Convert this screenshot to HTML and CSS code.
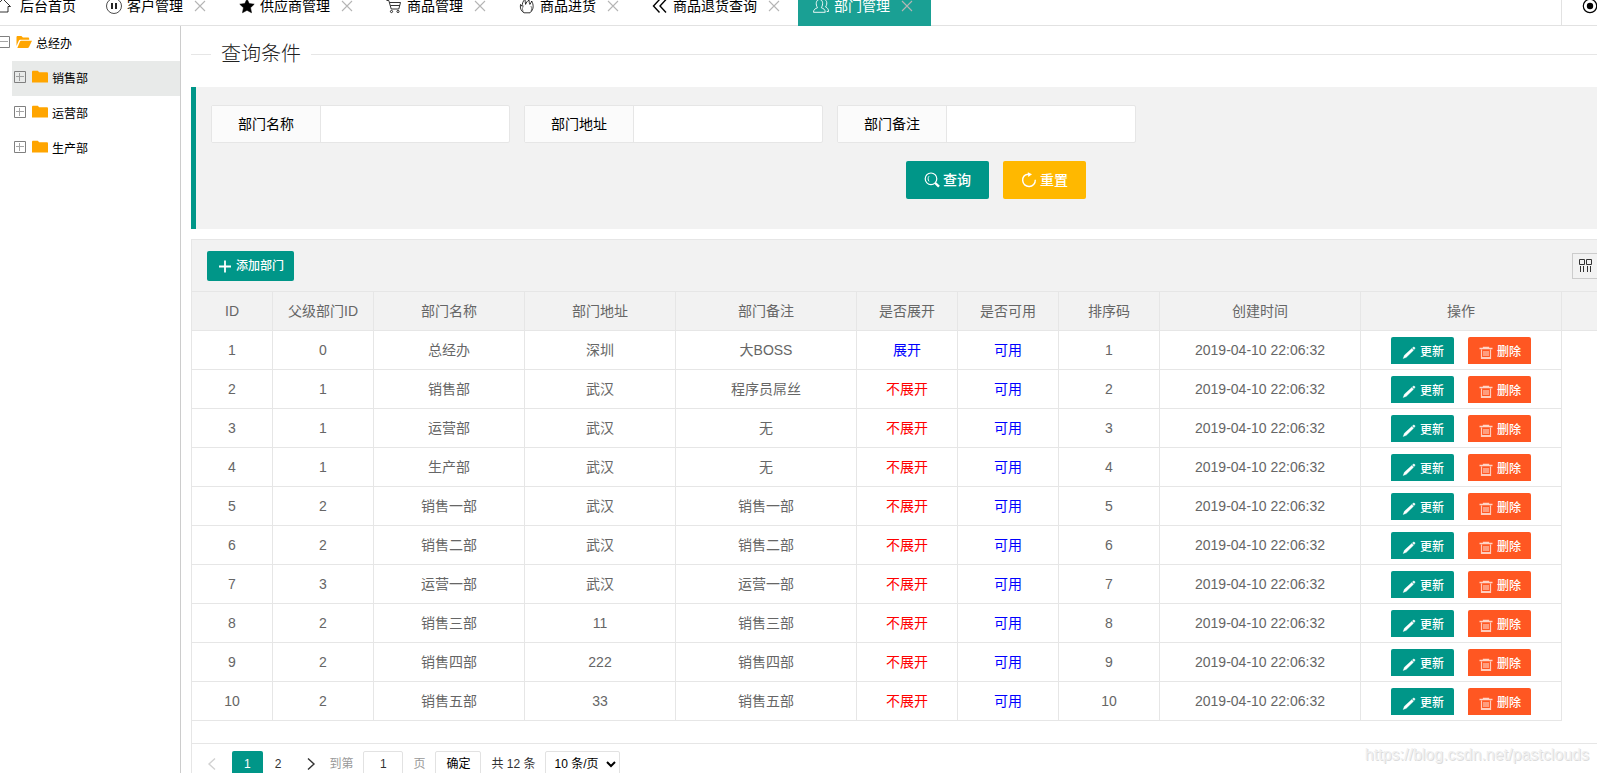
FILE: index.html
```html
<!DOCTYPE html>
<html lang="zh-CN">
<head>
<meta charset="utf-8">
<title>部门管理</title>
<link rel="stylesheet" href="styles.css">
</head>
<body>
<svg class="sprite" aria-hidden="true">
  <symbol id="i-home" viewBox="0 0 16 16"><path d="M.5 8.500 8 1l7.500 7.500h-2.500v5.500h-10V8.500z" fill="none" stroke="currentColor" stroke-width=".8"/></symbol>
  <symbol id="i-pause" viewBox="0 0 16 16"><circle cx="8" cy="8" r="7.500" fill="none" stroke="currentColor" stroke-width=".7"/><path d="M6 5v6M10 5v6" stroke="currentColor" stroke-width="1.700"/></symbol>
  <symbol id="i-star" viewBox="0 0 16 16"><path d="M8 1l2.200 4.600 5 .600-3.700 3.500 1 5L8 12.300 3.500 14.700l1-5L.8 6.200l5-.600z" fill="currentColor" stroke="currentColor" stroke-width=".6"/></symbol>
  <symbol id="i-cart" viewBox="0 0 16 16"><path d="M.5 2.500h2.300l2.400 8.500h7.600l1.700-6.500H3.700M4.600 7.500h9" fill="none" stroke="currentColor" stroke-width=".8"/><circle cx="5.500" cy="13.500" r="1.100" fill="none" stroke="currentColor" stroke-width=".8"/><circle cx="12" cy="13.500" r="1.100" fill="none" stroke="currentColor" stroke-width=".8"/></symbol>
  <symbol id="i-fire" viewBox="0 0 16 16"><path d="M5 14.800C2 13 .8 10 1.500 6.500l1.600 1.800C3.200 5.500 4 3 6 1.200c.2 2 .2 3.600.6 5.200C7.300 4.400 8.300 3 10 2c0 1.700.3 3 .9 4.400.7-.8 1.200-1.800 1.800-3.400 1.800 3.500 2.600 8-1.700 11.800z" fill="none" stroke="currentColor" stroke-width=".8"/><path d="M4.300 13.500C3 11.500 3.300 9.500 4.700 7.500M11.800 13.500c1.200-2 .9-3.800.1-5.500" fill="none" stroke="currentColor" stroke-width=".5"/></symbol>
  <symbol id="i-back" viewBox="0 0 16 16"><path d="M7.500 1.500 1.500 8l6 6.500M14 1.500 8 8l6 6.500" fill="none" stroke="currentColor" stroke-width="1.400"/></symbol>
  <symbol id="i-group" viewBox="0 0 16 16"><path d="M.5 14.300c0-2.800 1.700-3.600 4-4.600C2.300 6.500 3 1.500 6.500 1.500s4 5 1.800 8.200c2.500 1 3.900 1.800 3.900 4.600zM10.200 1.500c3.400-.8 4.800 3.800 2.400 7.500 1.900.9 2.900 2 2.900 4.500h-1.800" fill="none" stroke="currentColor" stroke-width=".9"/></symbol>
  <symbol id="i-close" viewBox="0 0 16 16"><path d="M3 3l10 10M13 3 3 13" stroke="currentColor" stroke-width="1.100"/></symbol>
  <symbol id="i-target" viewBox="0 0 16 16"><circle cx="8" cy="8" r="6.700" fill="none" stroke="currentColor" stroke-width="1.200"/><circle cx="8" cy="8" r="3.200" fill="currentColor"/></symbol>
  <symbol id="i-minus" viewBox="0 0 12 12"><path d="M.5.5h11v11H.5z" fill="none" stroke="currentColor"/><path d="M2 5.500h8" stroke="currentColor" opacity=".7"/></symbol>
  <symbol id="i-plusbox" viewBox="0 0 12 12"><path d="M.5.5h11v11H.5z" fill="none" stroke="currentColor"/><path d="M2 5.500h8M5.500 2v8" stroke="currentColor" opacity=".7"/></symbol>
  <symbol id="i-folder" viewBox="0 0 16 14"><path d="M0 12.500V2C0 1.300.5.800 1.200.8h4.600l1.400 1.500h7.600c.7 0 1.200.4 1.200 1.100v9.100z" fill="currentColor"/></symbol>
  <symbol id="i-open" viewBox="0 0 16 14"><path d="M.5 11V2.200C.5 1.500 1 1 1.700 1h3.700l1.500 1.500H12c.7 0 1.200.5 1.200 1.200v1H4.500c-.8 0-1.300.3-1.700 1.100z" fill="currentColor"/><path d="M1.300 13 4 6.500c.2-.5.600-.8 1.100-.8H16L13 12c-.3.700-.8 1-1.500 1z" fill="currentColor"/></symbol>
  <symbol id="i-search" viewBox="0 0 16 16"><circle cx="7" cy="6.800" r="5.800" fill="none" stroke="currentColor" stroke-width="1.200"/><path d="M5 4.200c-1.200 1.500-1.200 3.600 0 5.200" fill="none" stroke="currentColor"/><path d="M11.200 11l3.800 3.700" stroke="currentColor" stroke-width="2.400"/></symbol>
  <symbol id="i-reset" viewBox="0 0 16 16"><path d="M7 2.200C3.500 2.700 1.500 5.300 1.700 8.600c.3 3.400 3 6 6.500 5.900 3.600-.1 6.300-3 6.100-6.700" fill="none" stroke="currentColor" stroke-width="1.400"/><path d="M6.800.2 11 2.300 7.300 5z" fill="currentColor"/></symbol>
  <symbol id="i-add" viewBox="0 0 16 16"><path d="M2 8.500h12M8 2.500v12" stroke="currentColor" stroke-width="1.800"/></symbol>
  <symbol id="i-edit" viewBox="0 0 16 16"><path d="M2.200 14.500l1.200-3.200L10.800 4.500l1.700 1.800-7.200 7zM11.400 3.900l.9-.7c.4-.3.800-.2 1.100 0l.4.400c.3.400.2.800 0 1.100l-.8.900z" fill="currentColor" stroke="currentColor" stroke-width=".4"/></symbol>
  <symbol id="i-trash" viewBox="0 0 16 16"><path d="M1.500 4.500h13M5.500 4.500v-1H10.500v1" fill="none" stroke="currentColor" stroke-width="1.300" opacity=".75"/><path d="M3.500 5.500v8.800h9V5.500M6 7v5M8 7v5M10 7v5M4 13.600h8" fill="none" stroke="currentColor" stroke-width="1.200" opacity=".7"/></symbol>
  <symbol id="i-cols" viewBox="0 0 14 14"><path d="M1.500.5h5v5h-5zM8.500.5h5v5h-5zM2.500 7v6M5.500 7v6M9.500 7v6M12.500 7v6" fill="none" stroke="currentColor"/></symbol>
  <symbol id="i-left" viewBox="0 0 16 16"><path d="M11 2.500 5 8l6 5.500" fill="none" stroke="currentColor" stroke-width="1.400"/></symbol>
  <symbol id="i-right" viewBox="0 0 16 16"><path d="M5 2.500 11 8l-6 5.500" fill="none" stroke="currentColor" stroke-width="1.400"/></symbol>
</svg>

<header class="tabbar">
  <nav class="tabs">
    <a class="tab home" href="#"><svg class="icon"><use href="#i-home"/></svg>后台首页</a>
    <a class="tab" href="#"><svg class="icon"><use href="#i-pause"/></svg>客户管理<svg class="icon close"><use href="#i-close"/></svg></a>
    <a class="tab" href="#"><svg class="icon"><use href="#i-star"/></svg>供应商管理<svg class="icon close"><use href="#i-close"/></svg></a>
    <a class="tab" href="#"><svg class="icon"><use href="#i-cart"/></svg>商品管理<svg class="icon close"><use href="#i-close"/></svg></a>
    <a class="tab" href="#"><svg class="icon"><use href="#i-fire"/></svg>商品进货<svg class="icon close"><use href="#i-close"/></svg></a>
    <a class="tab" href="#"><svg class="icon"><use href="#i-back"/></svg>商品退货查询<svg class="icon close"><use href="#i-close"/></svg></a>
    <a class="tab active" href="#"><svg class="icon"><use href="#i-group"/></svg>部门管理<svg class="icon close"><use href="#i-close"/></svg></a>
  </nav>
  <button class="tab-tools" type="button" aria-label="页面操作"><svg class="icon"><use href="#i-target"/></svg></button>
</header>

<div class="body">
  <aside class="sidebar">
    <ul class="tree">
      <li class="node root"><svg class="toggle"><use href="#i-minus"/></svg><svg class="folder"><use href="#i-open"/></svg><span>总经办</span></li>
      <li class="node selected"><svg class="toggle"><use href="#i-plusbox"/></svg><svg class="folder"><use href="#i-folder"/></svg><span>销售部</span></li>
      <li class="node"><svg class="toggle"><use href="#i-plusbox"/></svg><svg class="folder"><use href="#i-folder"/></svg><span>运营部</span></li>
      <li class="node"><svg class="toggle"><use href="#i-plusbox"/></svg><svg class="folder"><use href="#i-folder"/></svg><span>生产部</span></li>
    </ul>
  </aside>

  <main class="main">
    <fieldset class="title"><legend>查询条件</legend></fieldset>

    <form class="query">
      <div class="fields">
        <div class="field"><label for="q-name">部门名称</label><input id="q-name" type="text"></div>
        <div class="field"><label for="q-addr">部门地址</label><input id="q-addr" type="text"></div>
        <div class="field"><label for="q-note">部门备注</label><input id="q-note" type="text"></div>
      </div>
      <div class="actions">
        <button class="btn" type="button"><svg class="icon"><use href="#i-search"/></svg>查询</button>
        <button class="btn warm" type="reset"><svg class="icon"><use href="#i-reset"/></svg>重置</button>
      </div>
    </form>

    <section class="grid">
      <div class="toolbar">
        <button class="btn small" type="button"><svg class="icon"><use href="#i-add"/></svg>添加部门</button>
        <button class="columns" type="button" aria-label="筛选列"><svg class="cols"><use href="#i-cols"/></svg></button>
      </div>
      <table>
        <colgroup><col class="w80"><col class="w100"><col class="w150"><col class="w150"><col class="w180"><col class="w100"><col class="w100"><col class="w100"><col class="w200"><col class="w200"><col></colgroup>
        <thead>
          <tr><th>ID</th><th>父级部门ID</th><th>部门名称</th><th>部门地址</th><th>部门备注</th><th>是否展开</th><th>是否可用</th><th>排序码</th><th>创建时间</th><th>操作</th><th class="rest"></th></tr>
        </thead>
        <tbody>
          <tr><td>1</td><td>0</td><td>总经办</td><td>深圳</td><td>大BOSS</td><td class="yes">展开</td><td class="yes">可用</td><td>1</td><td>2019-04-10 22:06:32</td><td><div class="ops"><button class="btn op" type="button"><svg class="icon"><use href="#i-edit"/></svg>更新</button><button class="btn op danger" type="button"><svg class="icon"><use href="#i-trash"/></svg>删除</button></div></td></tr>
          <tr><td>2</td><td>1</td><td>销售部</td><td>武汉</td><td>程序员屌丝</td><td class="no">不展开</td><td class="yes">可用</td><td>2</td><td>2019-04-10 22:06:32</td><td><div class="ops"><button class="btn op" type="button"><svg class="icon"><use href="#i-edit"/></svg>更新</button><button class="btn op danger" type="button"><svg class="icon"><use href="#i-trash"/></svg>删除</button></div></td></tr>
          <tr><td>3</td><td>1</td><td>运营部</td><td>武汉</td><td>无</td><td class="no">不展开</td><td class="yes">可用</td><td>3</td><td>2019-04-10 22:06:32</td><td><div class="ops"><button class="btn op" type="button"><svg class="icon"><use href="#i-edit"/></svg>更新</button><button class="btn op danger" type="button"><svg class="icon"><use href="#i-trash"/></svg>删除</button></div></td></tr>
          <tr><td>4</td><td>1</td><td>生产部</td><td>武汉</td><td>无</td><td class="no">不展开</td><td class="yes">可用</td><td>4</td><td>2019-04-10 22:06:32</td><td><div class="ops"><button class="btn op" type="button"><svg class="icon"><use href="#i-edit"/></svg>更新</button><button class="btn op danger" type="button"><svg class="icon"><use href="#i-trash"/></svg>删除</button></div></td></tr>
          <tr><td>5</td><td>2</td><td>销售一部</td><td>武汉</td><td>销售一部</td><td class="no">不展开</td><td class="yes">可用</td><td>5</td><td>2019-04-10 22:06:32</td><td><div class="ops"><button class="btn op" type="button"><svg class="icon"><use href="#i-edit"/></svg>更新</button><button class="btn op danger" type="button"><svg class="icon"><use href="#i-trash"/></svg>删除</button></div></td></tr>
          <tr><td>6</td><td>2</td><td>销售二部</td><td>武汉</td><td>销售二部</td><td class="no">不展开</td><td class="yes">可用</td><td>6</td><td>2019-04-10 22:06:32</td><td><div class="ops"><button class="btn op" type="button"><svg class="icon"><use href="#i-edit"/></svg>更新</button><button class="btn op danger" type="button"><svg class="icon"><use href="#i-trash"/></svg>删除</button></div></td></tr>
          <tr><td>7</td><td>3</td><td>运营一部</td><td>武汉</td><td>运营一部</td><td class="no">不展开</td><td class="yes">可用</td><td>7</td><td>2019-04-10 22:06:32</td><td><div class="ops"><button class="btn op" type="button"><svg class="icon"><use href="#i-edit"/></svg>更新</button><button class="btn op danger" type="button"><svg class="icon"><use href="#i-trash"/></svg>删除</button></div></td></tr>
          <tr><td>8</td><td>2</td><td>销售三部</td><td>11</td><td>销售三部</td><td class="no">不展开</td><td class="yes">可用</td><td>8</td><td>2019-04-10 22:06:32</td><td><div class="ops"><button class="btn op" type="button"><svg class="icon"><use href="#i-edit"/></svg>更新</button><button class="btn op danger" type="button"><svg class="icon"><use href="#i-trash"/></svg>删除</button></div></td></tr>
          <tr><td>9</td><td>2</td><td>销售四部</td><td>222</td><td>销售四部</td><td class="no">不展开</td><td class="yes">可用</td><td>9</td><td>2019-04-10 22:06:32</td><td><div class="ops"><button class="btn op" type="button"><svg class="icon"><use href="#i-edit"/></svg>更新</button><button class="btn op danger" type="button"><svg class="icon"><use href="#i-trash"/></svg>删除</button></div></td></tr>
          <tr><td>10</td><td>2</td><td>销售五部</td><td>33</td><td>销售五部</td><td class="no">不展开</td><td class="yes">可用</td><td>10</td><td>2019-04-10 22:06:32</td><td><div class="ops"><button class="btn op" type="button"><svg class="icon"><use href="#i-edit"/></svg>更新</button><button class="btn op danger" type="button"><svg class="icon"><use href="#i-trash"/></svg>删除</button></div></td></tr>
        </tbody>
      </table>
      <div class="pager">
        <button class="page prev" type="button" aria-label="上一页" disabled><svg class="icon"><use href="#i-left"/></svg></button>
        <button class="page current" type="button">1</button>
        <button class="page" type="button">2</button>
        <button class="page next" type="button" aria-label="下一页"><svg class="icon"><use href="#i-right"/></svg></button>
        <label class="jump">到第<input type="text" value="1">页</label>
        <button class="confirm" type="button">确定</button>
        <span class="total">共 12 条</span>
        <select class="limit" aria-label="每页条数"><option>10 条/页</option><option>20 条/页</option></select>
      </div>
    </section>
  </main>
</div>
<div class="watermark">https://blog.csdn.net/pastclouds</div>
</body>
</html>
```
FILE: styles.css
```css
* { box-sizing: border-box; }

body {
  margin: 0;
  height: 100vh;
  overflow: hidden;
  display: flex;
  flex-direction: column;
  background: #fff;
  color: #000;
  font: 14px/24px "Liberation Sans", "Noto Sans CJK SC", sans-serif;
}

button, input, select { font: inherit; color: inherit; margin: 0; }
button { cursor: pointer; }
.sprite { display: none; }
.icon { width: 16px; height: 16px; flex: none; }

/* Tab bar, scrolled slightly past its top and left edges */
.tabbar {
  flex: none;
  display: flex;
  align-items: flex-end;
  height: 26px;
  overflow: hidden;
  box-shadow: inset 0 -1px #e2e2e2;
}
.tabs { display: flex; flex: 1; margin-left: -20px; }
.tab {
  display: flex;
  align-items: center;
  height: 40px;
  padding: 0 15px;
  color: #000;
  text-decoration: none;
  white-space: nowrap;
}
.tab .icon:first-child { margin-right: 5px; }
.tab.home .icon { margin-right: 9px; }
.tab .close { margin-left: 9px; margin-right: 1px; color: #b5b5b5; }
.tab.active { background: #1aa094; color: #fff; }
.tab-tools {
  flex: none;
  width: 36px;
  height: 40px;
  padding: 0 0 0 20px;
  border: 0;
  border-left: 1px solid #e2e2e2;
  background: none;
  display: flex;
  align-items: center;
  overflow: hidden;
}

.body { flex: 1; display: flex; min-height: 0; }

.sidebar { flex: none; width: 181px; border-right: 1px solid #ccc; }
.tree { margin: 0; padding: 0; list-style: none; font-size: 12px; }
.node {
  display: flex;
  align-items: center;
  height: 35px;
  margin-left: 12px;
  padding-left: 2px;
}
.node.root { margin-left: -4px; }
.node.selected { background: #e8eae9; }
.toggle { width: 12px; height: 12px; margin: 0 6px 3px 0; color: #808080; }
.folder { width: 16px; height: 14px; margin: 0 4px 3px 0; color: #ffa500; }

.main { flex: 1; min-width: 0; padding-left: 10px; overflow: hidden; }

.title {
  min-width: 0;
  margin: 16px 0 21px;
  padding: 0;
  border: 0;
  border-top: 1px solid #e6e6e6;
}
.title legend {
  margin-left: 20px;
  padding: 0 10px;
  font-size: 20px;
  font-weight: 300;
  color: #222;
}

.query {
  padding: 18px 15px 30px;
  border-left: 5px solid #009688;
  background: #f2f2f2;
}
.fields { display: flex; gap: 14px; }
.field { display: flex; flex: none; border: 1px solid #e6e6e6; border-radius: 2px; background: #fff; }
.field label {
  width: 109px;
  height: 36px;
  line-height: 36px;
  border-right: 1px solid #e6e6e6;
  background: #fbfbfb;
  text-align: center;
}
.field input { width: 188px; height: 36px; padding: 0 10px; border: 0; background: none; }
.actions { display: flex; gap: 14px; margin-top: 18px; padding-left: 695px; }

.btn {
  display: flex;
  align-items: center;
  gap: 3px;
  height: 38px;
  padding: 0 18px;
  border: 0;
  border-radius: 2px;
  background: #009688;
  color: #fff;
  font-weight: 500;
  white-space: nowrap;
}
.btn.warm { background: #ffb800; }
.btn.danger { background: #ff5722; }
.btn.small { height: 30px; padding: 0 10px; font-size: 12px; }
.btn.op { height: 27px; padding: 3px 10px 0; border-radius: 2px 2px 0 0; font-size: 12px; line-height: 24px; }

.grid { margin-top: 10px; border: 1px solid #e6e6e6; border-right: 0; }
.toolbar {
  display: flex;
  align-items: center;
  justify-content: space-between;
  height: 52px;
  padding-left: 15px;
  border-bottom: 1px solid #e6e6e6;
  background: #f2f2f2;
}
.columns {
  display: flex;
  align-items: center;
  justify-content: center;
  width: 25px;
  height: 26px;
  padding: 0;
  border: 1px solid #ccc;
  border-right: 0;
  background: none;
  color: #333;
}
.cols { width: 14px; height: 14px; flex: none; }

table { width: 100%; table-layout: fixed; border-collapse: separate; border-spacing: 0; color: #666; }
.w80 { width: 81px; }
.w100 { width: 101px; }
.w150 { width: 151px; }
.w180 { width: 181px; }
.w200 { width: 201px; }
th, td {
  height: 39px;
  padding: 0;
  border-right: 1px solid #e6e6e6;
  border-bottom: 1px solid #e6e6e6;
  text-align: center;
  font-weight: 400;
  white-space: nowrap;
}
th { background: #f2f2f2; }
th.rest { border-right: 0; }
td.yes { color: #00f; }
td.no { color: #f00; }
.ops { display: flex; justify-content: center; gap: 14px; }

.pager {
  display: flex;
  align-items: flex-start;
  margin-top: 22px;
  padding: 7px 0;
  border-top: 1px solid #e6e6e6;
  font-size: 12px;
  color: #333;
}
.page { height: 26px; padding: 0 12px; border: 0; border-radius: 2px; background: none; }
.page.prev, .page.next { display: flex; align-items: center; }
.page.prev { color: #d2d2d2; }
.page.next { padding: 0 10px; }
.page.current { background: #009688; color: #fff; }
.jump { display: flex; height: 26px; line-height: 26px; color: #999; }
.jump input {
  width: 40px;
  height: 26px;
  margin: 0 10px;
  padding: 0;
  border: 1px solid #e2e2e2;
  border-radius: 2px;
  text-align: center;
  color: #333;
}
.confirm {
  height: 26px;
  margin: 0 10px;
  padding: 0 10px;
  border: 1px solid #e2e2e2;
  border-radius: 2px;
  background: #fff;
  color: #000;
}
.total { line-height: 26px; margin-right: 10px; }
.limit { height: 26px; padding: 0 4px; border: 1px solid #e2e2e2; border-radius: 2px; background: #fff; color: #000; }

.watermark {
  position: absolute;
  right: 8px;
  bottom: 6px;
  font-size: 16px;
  color: #f0f0f0;
  text-shadow: 1px 1px #dcdcdc;
}
```
